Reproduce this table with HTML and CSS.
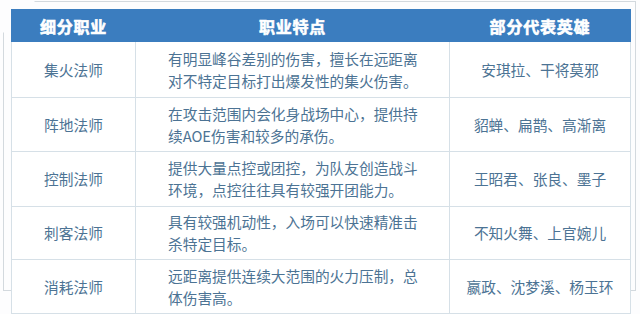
FILE: index.html
```html
<!DOCTYPE html>
<html lang="zh-CN">
<head>
<meta charset="utf-8">
<link rel="stylesheet" href="styles.css">
</head>
<body>
<div class="page">
  <table class="roles">
    <colgroup>
      <col class="c1"><col class="c2"><col class="c3">
    </colgroup>
    <thead>
      <tr><th>细分职业</th><th>职业特点</th><th>部分代表英雄</th></tr>
    </thead>
    <tbody>
      <tr><td class="name">集火法师</td><td class="desc">有明显峰谷差别的伤害，擅长在远距离<br>对不特定目标打出爆发性的集火伤害。</td><td class="hero">安琪拉、干将莫邪</td></tr>
      <tr><td class="name">阵地法师</td><td class="desc">在攻击范围内会化身战场中心，提供持<br>续AOE伤害和较多的承伤。</td><td class="hero">貂蝉、扁鹊、高渐离</td></tr>
      <tr><td class="name">控制法师</td><td class="desc">提供大量点控或团控，为队友创造战斗<br>环境，点控往往具有较强开团能力。</td><td class="hero">王昭君、张良、墨子</td></tr>
      <tr><td class="name">刺客法师</td><td class="desc">具有较强机动性，入场可以快速精准击<br>杀特定目标。</td><td class="hero">不知火舞、上官婉儿</td></tr>
      <tr><td class="name">消耗法师</td><td class="desc">远距离提供连续大范围的火力压制，总<br>体伤害高。</td><td class="hero">嬴政、沈梦溪、杨玉环</td></tr>
    </tbody>
  </table>
</div>
</body>
</html>
```

FILE: styles.css
```css
html, body {
  margin: 0;
  padding: 0;
  background: #fdfdfe;
}
body {
  font-family: "Noto Sans CJK SC", "Noto Sans", sans-serif;
  width: 640px;
  height: 314px;
  overflow: hidden;
}
.page {
  position: relative;
  padding: 9px 0 0 11px;
}
.page::before {
  content: "";
  position: absolute;
  left: 3px;
  top: 1px;
  width: 631px;
  height: 288px;
  border: 1px solid #d3d9de;
  clip-path: polygon(32px 0, 100% 0, 100% 100%, 0 100%, 0 32px);
  z-index: 0;
}
.roles {
  position: relative;
  z-index: 1;
  border-collapse: collapse;
  table-layout: fixed;
  width: 619px;
  background: #ffffff;
}
.c1 { width: 124px; }
.c2 { width: 314px; }
.c3 { width: 181px; }
.roles th {
  background: #3b7dbf;
  color: #ffffff;
  font-weight: 700;
  font-size: 16px;
  -webkit-text-stroke: 0.6px #ffffff;
  height: 31px;
  padding: 0;
  text-align: center;
  letter-spacing: 0.8px;
  border: 1px solid #3b7dbf;
  line-height: 20px;
}
.roles td {
  border: 1px solid #d6e0e7;
  color: #4c7394;
  font-size: 14.7px;
  line-height: 22px;
  padding: 0;
  vertical-align: middle;
}
.roles tbody tr:nth-child(1) { height: 56px; }
.roles tbody tr:nth-child(2) { height: 54px; }
.roles tbody tr:nth-child(3) { height: 55px; }
.roles tbody tr:nth-child(4) { height: 53px; }
.roles tbody tr:nth-child(5) { height: 54px; }
.name, .hero {
  text-align: center;
}
.desc {
  text-align: left;
  padding-left: 32px !important;
  white-space: nowrap;
}
```
